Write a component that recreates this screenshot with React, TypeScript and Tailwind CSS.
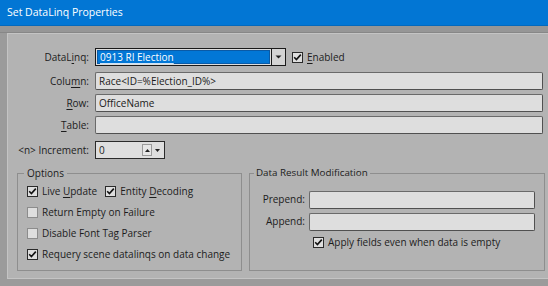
import React from "react";

const font = { fontFamily: '"Open Sans", "Liberation Sans", Arial, sans-serif' };

function Check({ checked }: { checked: boolean }) {
  return (
    <span
      className={`inline-flex items-center justify-center w-[11px] h-[11px] shrink-0 bg-[#dedede] border ${
        checked ? "border-[#2a2a2a]" : "border-[#8c8c8c]"
      }`}
    >
      {checked && (
        <svg width="9" height="9" viewBox="0 0 9 9">
          <path d="M1.2 4.3 L3.4 6.6 L7.8 1.6" fill="none" stroke="#111" strokeWidth="1.6" />
        </svg>
      )}
    </span>
  );
}

function U({ children }: { children: React.ReactNode }) {
  return <span className="underline underline-offset-[2px]">{children}</span>;
}

function Field({ children, className = "" }: { children?: React.ReactNode; className?: string }) {
  return (
    <div
      className={`h-[18px] bg-[#dedede] border border-[#6a6a6a] border-r-[#505050] border-b-[#505050] rounded-[2px] flex items-center pl-[3px] text-[#1a1a1a] whitespace-nowrap ${className}`}
    >
      {children}
    </div>
  );
}

export default function App() {
  return (
    <div className="w-[548px] h-[286px] overflow-hidden bg-[#9b9b9b] text-[10px] text-[#1c1c1c] whitespace-nowrap" style={font}>
      <div className="h-[26px] bg-[#0276d4] flex items-center pl-[7px] text-white text-[10.5px] border-b border-[#0369bd]">
        Set DataLinq Properties
      </div>
      <div className="h-[7px] bg-[#969696] border-b border-[#878787]" />
      <div className="flex h-[246px]">
        <div className="w-[7px] bg-[#9b9b9b]" />
        <div className="flex-1 bg-[#b3b3b3] border-l border-t border-b border-[#c4c4c4] pt-[14px] pl-0">
          {/* DataLinq */}
          <div className="flex items-center h-[18px]">
            <div className="w-[82px] text-right pr-[1px]">
              DataL<U>i</U>nq:
            </div>
            <div className="ml-[5px] flex items-center">
              <div className="w-[177px] h-[18px] border border-[#1a1a1a] bg-[#dedede] p-[1px]">
                <div className="h-full bg-[#0277d6] border border-[#0a5aa6] text-white flex items-center pl-[2px]">
                  <span className="underline decoration-[#cfe4f7] underline-offset-[2px]">0913 RI Election</span>
                </div>
              </div>
              <div className="w-[14px] h-[18px] border border-[#1a1a1a] border-l-0 bg-[#d4d4d4] flex items-center justify-center">
                <svg width="7" height="4" viewBox="0 0 7 4">
                  <path d="M0.5 0.5 L6.5 0.5 L3.5 3.5 Z" fill="#222" />
                </svg>
              </div>
              <div className="ml-[6px] flex items-center gap-[4px]">
                <Check checked />
                <span>
                  <U>E</U>nabled
                </span>
              </div>
            </div>
          </div>
          {/* Column */}
          <div className="flex items-center h-[18px] mt-[6px]">
            <div className="w-[82px] text-right pr-[1px]">
              Colu<U>m</U>n:
            </div>
            <Field className="ml-[5px] w-[448px]">Race&lt;ID=%Election_ID%&gt;</Field>
          </div>
          {/* Row */}
          <div className="flex items-center h-[18px] mt-[4px]">
            <div className="w-[82px] text-right pr-[1px]">
              <U>R</U>ow:
            </div>
            <Field className="ml-[5px] w-[448px]">OfficeName</Field>
          </div>
          {/* Table */}
          <div className="flex items-center h-[18px] mt-[4px]">
            <div className="w-[82px] text-right pr-[1px]">
              <U>T</U>able:
            </div>
            <Field className="ml-[5px] w-[448px]" />
          </div>
          {/* Increment */}
          <div className="flex items-center h-[18px] mt-[7px]">
            <div className="w-[82px] text-right pr-[1px]">&lt;n&gt; Increment:</div>
            <div className="ml-[5px] w-[70px] h-[18px] border border-[#2a2a2a] bg-[#dedede] flex items-center justify-between pl-[3px] pr-[2px]">
              <span>0</span>
              <div className="flex items-center h-[14px]">
                <div className="w-[10px] h-[12px] bg-[#e6e6e6] border border-[#9a9a9a] flex items-center justify-center">
                  <svg width="5" height="3" viewBox="0 0 5 3">
                    <path d="M0 3 L5 3 L2.5 0 Z" fill="#222" />
                  </svg>
                </div>
                <div className="w-[10px] h-[12px] flex items-center justify-center">
                  <svg width="5" height="3" viewBox="0 0 5 3">
                    <path d="M0 0 L5 0 L2.5 3 Z" fill="#222" />
                  </svg>
                </div>
              </div>
            </div>
          </div>
          {/* Groups */}
          <div className="flex mt-[14px] pl-[9px] gap-[7px]">
            <div className="relative w-[225px] h-[98px] border border-[#8e8e8e] mt-[0px]">
              <span className="absolute -top-[8px] left-[6px] px-[3px] bg-[#b3b3b3] leading-[14px]">Options</span>
              <div className="pt-[11px] pl-[9px] flex flex-col gap-[8px]">
                <div className="flex items-center h-[13px]">
                  <Check checked />
                  <span className="ml-[4px]">
                    Live <U>U</U>pdate
                  </span>
                  <span className="ml-[8px] flex items-center">
                    <Check checked />
                    <span className="ml-[4px]">
                      Entity <U>D</U>ecoding
                    </span>
                  </span>
                </div>
                <div className="flex items-center h-[13px]">
                  <Check checked={false} />
                  <span className="ml-[4px]">Return Empty on Failure</span>
                </div>
                <div className="flex items-center h-[13px]">
                  <Check checked={false} />
                  <span className="ml-[4px]">Disable Font Tag Parser</span>
                </div>
                <div className="flex items-center h-[13px]">
                  <Check checked />
                  <span className="ml-[4px]">Requery scene datalinqs on data change</span>
                </div>
              </div>
            </div>
            <div className="relative w-[296px] h-[98px] border border-[#8e8e8e]">
              <span className="absolute -top-[8px] left-[4px] px-[2px] bg-[#b3b3b3] leading-[14px] text-[9.8px]">
                Data Result Modification
              </span>
              <div className="pt-[17px] flex flex-col">
                <div className="flex items-center h-[17px]">
                  <div className="w-[55px] text-right">Prepend:</div>
                  <Field className="ml-[4px] w-[226px] h-[17px]" />
                </div>
                <div className="flex items-center h-[17px] mt-[5px]">
                  <div className="w-[55px] text-right">Append:</div>
                  <Field className="ml-[4px] w-[226px] h-[17px]" />
                </div>
                <div className="flex items-center h-[13px] mt-[6px] pl-[63px]">
                  <Check checked />
                  <span className="ml-[4px]">Apply fields even when data is empty</span>
                </div>
              </div>
            </div>
          </div>
        </div>
      </div>
    </div>
  );
}
